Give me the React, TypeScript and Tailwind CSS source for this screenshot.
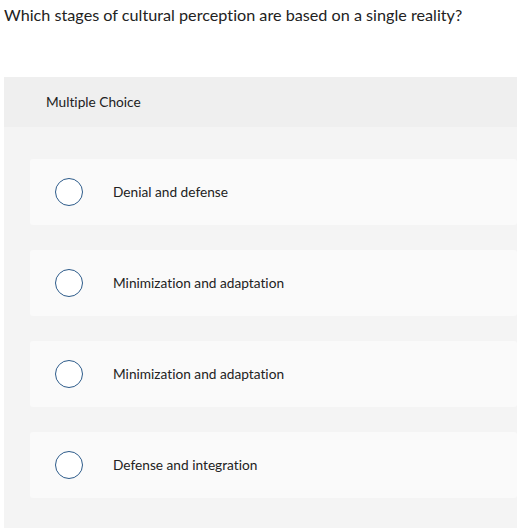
import React from "react";

const options = [
  "Denial and defense",
  "Minimization and adaptation",
  "Minimization and adaptation",
  "Defense and integration",
];

function Option({ label }: { label: string }) {
  return (
    <div className="flex h-[66px] items-center rounded-[3px] bg-[#fafafa] pl-[25px]">
      <span className="h-[28px] w-[28px] shrink-0 rounded-full border-[1.5px] border-[#2d5b8a] bg-white" />
      <span className="ml-[30px] pt-[1px] text-[13.7px] text-[#222]">{label}</span>
    </div>
  );
}

export default function App() {
  return (
    <div className="min-h-[528px] bg-white font-['Lato',sans-serif] text-[#222] [font-variant-ligatures:none]">
      <p className="px-[4px] pt-[5px] text-[16.2px] leading-[20px]">
        Which stages of cultural perception are based on a single reality?
      </p>

      <div className="ml-[4px] mt-[52px]">
        {/* header */}
        <div className="flex h-[50px] items-center bg-[#efefef] pl-[42px] pt-[1px] text-[13.7px]">
          Multiple Choice
        </div>

        {/* answers */}
        <div className="flex flex-col gap-[25px] bg-[#f4f4f4] pb-[30px] pl-[26px] pt-[32px]">
          {options.map((o, i) => (
            <Option key={i} label={o} />
          ))}
        </div>
      </div>
    </div>
  );
}
